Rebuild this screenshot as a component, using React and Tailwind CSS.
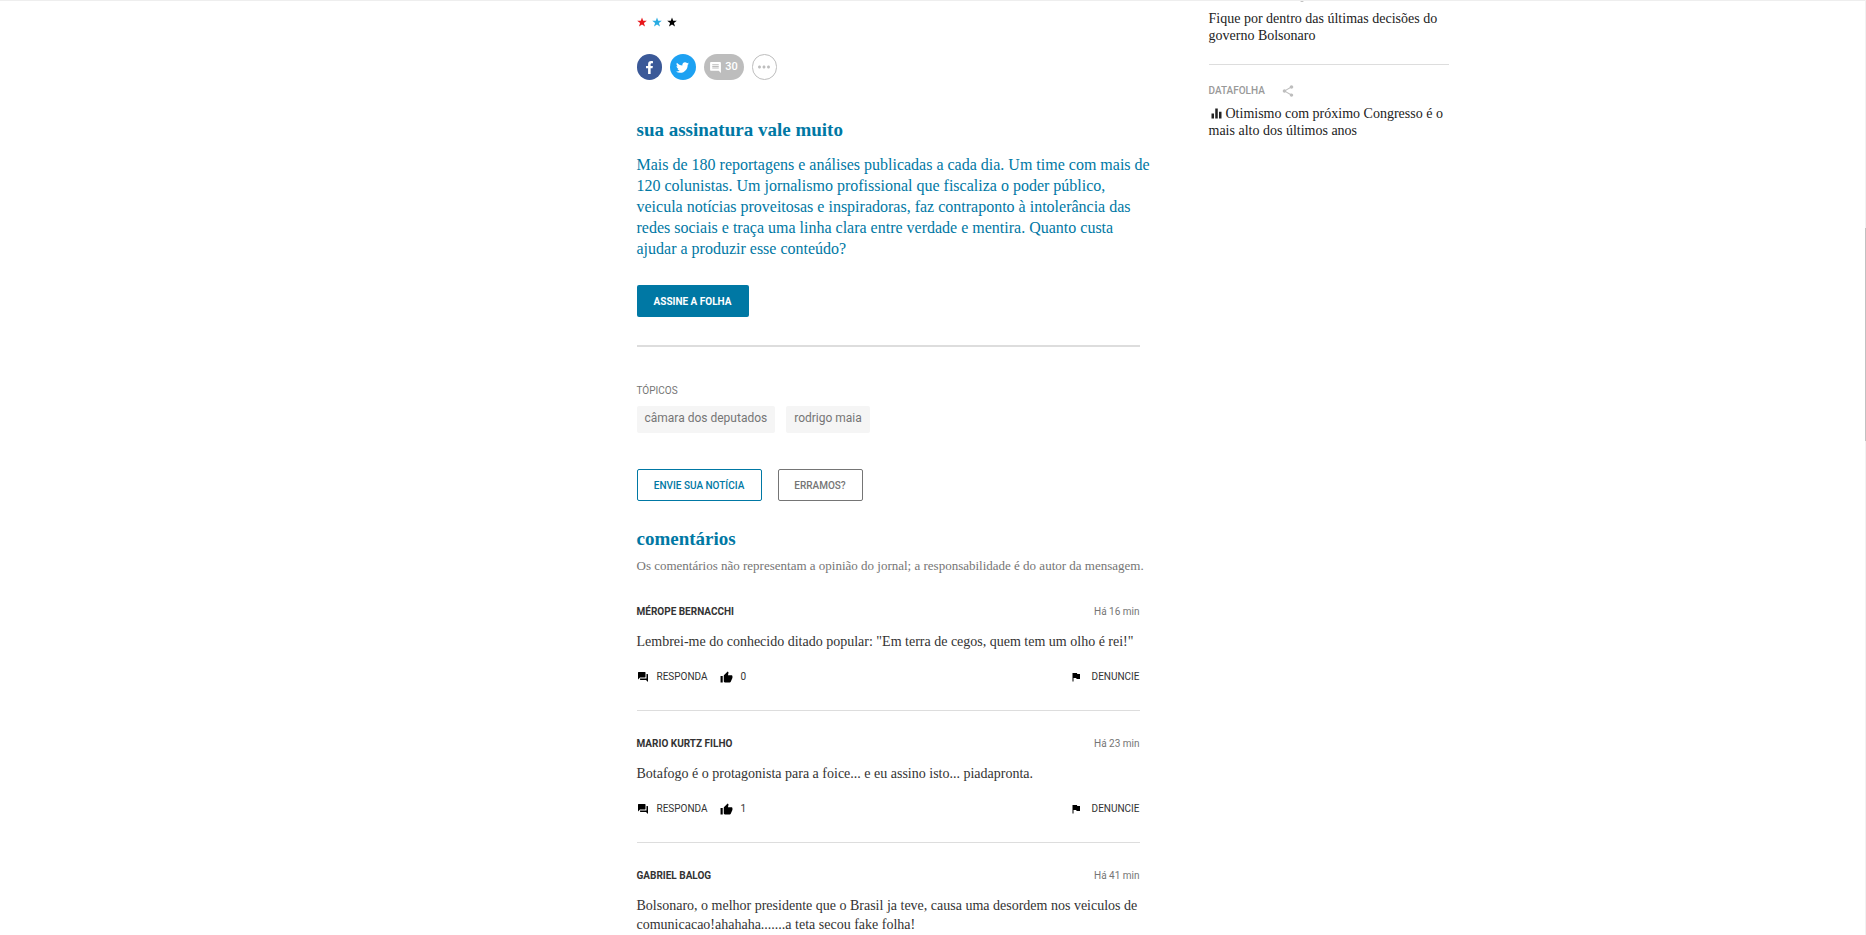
import { MdInsertComment, MdQuestionAnswer, MdThumbUp, MdFlag, MdShare, MdMoreHoriz, MdEqualizer } from "react-icons/md";
import { FaFacebookF, FaTwitter } from "react-icons/fa";

const SERIF = "font-['Liberation_Serif',serif]";

const comments = [
  {
    author: "MÉROPE BERNACCHI",
    time: "Há 16 min",
    lines: ['Lembrei-me do conhecido ditado popular: "Em terra de cegos, quem tem um olho é rei!"'],
    likes: 0,
  },
  {
    author: "MARIO KURTZ FILHO",
    time: "Há 23 min",
    lines: ["Botafogo é o protagonista para a foice... e eu assino isto... piadapronta."],
    likes: 1,
  },
  {
    author: "GABRIEL BALOG",
    time: "Há 41 min",
    lines: [
      "Bolsonaro, o melhor presidente que o Brasil ja teve, causa uma desordem nos veiculos de",
      "comunicacao!ahahaha.......a teta secou fake folha!",
    ],
  },
];

const pitch = [
  "Mais de 180 reportagens e análises publicadas a cada dia. Um time com mais de",
  "120 colunistas. Um jornalismo profissional que fiscaliza o poder público,",
  "veicula notícias proveitosas e inspiradoras, faz contraponto à intolerância das",
  "redes sociais e traça uma linha clara entre verdade e mentira. Quanto custa",
  "ajudar a produzir esse conteúdo?",
];

function Star({ className }) {
  return (
    <svg viewBox="0 0 24 24" className={`size-[10px] fill-current ${className}`} aria-hidden="true">
      <path d="M12 1l2.9 8.2h8.6l-6.9 5.2 2.6 8.6L12 17.9l-7.2 5.1 2.6-8.6L.5 9.2h8.6z" />
    </svg>
  );
}

function Lines({ items }) {
  return items.map((line) => (
    <span key={line} className="block whitespace-nowrap">
      {line}
    </span>
  ));
}

function ShareBar() {
  return (
    <div className="mt-[27px] flex gap-2">
      <a href="#facebook" aria-label="Facebook" className="flex h-[26px] w-[25px] items-center justify-center rounded-full bg-[#3b5998] text-white">
        <FaFacebookF className="size-[13px]" />
      </a>
      <a href="#twitter" aria-label="Twitter" className="flex h-[26px] w-[26px] items-center justify-center rounded-full bg-[#1da1f2] text-white">
        <FaTwitter className="size-[13px]" />
      </a>
      <a href="#comentarios" className="flex h-[26px] w-10 items-center justify-center gap-[3px] rounded-full bg-[#bdbdbd] text-[11px] font-medium text-white">
        <MdInsertComment className="size-[13px]" />
        30
      </a>
      <button type="button" aria-label="Mais opções" className="flex h-[26px] w-[25px] items-center justify-center rounded-full border border-[#bdbdbd] text-[#bdbdbd]">
        <MdMoreHoriz className="size-[18px] shrink-0" />
      </button>
    </div>
  );
}

function Actions({ likes }) {
  return (
    <div className="mt-[18px] flex text-[10px] leading-4 text-[#333]">
      <button type="button" className="flex items-center">
        <MdQuestionAnswer className="mr-2 size-3 text-black" />
        RESPONDA
      </button>
      <button type="button" aria-label="Curtir" className="ml-3 flex items-center">
        <MdThumbUp className="mr-2 size-[13px] text-black" />
        {likes}
      </button>
      <button type="button" className="ml-auto flex items-center">
        <MdFlag className="mr-[10px] size-3 text-black" />
        DENUNCIE
      </button>
    </div>
  );
}

function Comment({ author, time, lines, likes }) {
  return (
    <li className="border-b border-[#ddd] py-[25px] first:pt-0 last:border-b-0 last:pb-0">
      <div className="flex justify-between text-[10px] leading-4">
        <strong className="font-bold text-[#333]">{author}</strong>
        <span className="text-[#757575]">{time}</span>
      </div>
      <p className={`mt-3 text-[14px] leading-[19px] text-[#333] ${SERIF}`}>
        <Lines items={lines} />
      </p>
      {likes !== undefined && <Actions likes={likes} />}
    </li>
  );
}

export default function App() {
  return (
    <div className="flex min-h-screen bg-white font-['Roboto',sans-serif]">
      <div className="min-w-0 flex-1 border-t border-[#eee]">
        <div className="mx-auto flex max-w-[1032px] items-start justify-between pl-[220px]">
          <main className="w-[503px] pt-4">
            <div className="flex gap-[5px]">
              <Star className="text-[#e8161b]" />
              <Star className="text-[#2aace2]" />
              <Star className="text-black" />
            </div>
            <ShareBar />

            <section>
              <h2 className={`mt-[38px] text-[19px] leading-6 font-bold text-[#0078a4] ${SERIF}`}>sua assinatura vale muito</h2>
              <p className={`mt-3 text-[16px] leading-[21px] text-[#0078a4] ${SERIF}`}>
                <Lines items={pitch} />
              </p>
              <a href="#assine" className="mt-[26px] flex h-8 w-28 items-center justify-center rounded-xs bg-[#0078a4] text-[10px] font-bold text-white">
                ASSINE A FOLHA
              </a>
            </section>

            <hr className="mt-7 border-t-2 border-[#ddd]" />

            <section>
              <h3 className="mt-9 text-[10px] leading-4 text-[#757575]">TÓPICOS</h3>
              <div className="mt-[7px] flex gap-[11px] text-[12px] leading-[25px] text-[#757575]">
                <a href="#camara" className="rounded-xs bg-[#f5f5f5] px-2 pb-[2px]">câmara dos deputados</a>
                <a href="#maia" className="rounded-xs bg-[#f5f5f5] px-2 pb-[2px]">rodrigo maia</a>
              </div>
            </section>

            <div className="mt-9 flex gap-4 text-[10px] font-medium">
              <a href="#envie" className="flex h-8 w-[125px] items-center justify-center rounded-xs border border-[#0078a4] text-[#0078a4]">ENVIE SUA NOTÍCIA</a>
              <a href="#erramos" className="flex h-8 w-[85px] items-center justify-center rounded-xs border border-[#757575] text-[#757575]">ERRAMOS?</a>
            </div>

            <section id="comentarios">
              <h2 className={`mt-[26px] text-[19px] leading-6 font-bold text-[#0078a4] ${SERIF}`}>comentários</h2>
              <p className={`mt-[7px] text-[13px] leading-4 whitespace-nowrap text-[#757575] ${SERIF}`}>
                Os comentários não representam a opinião do jornal; a responsabilidade é do autor da mensagem.
              </p>
              <ul className="mt-[30px]">
                {comments.map((c) => (
                  <Comment key={c.author} {...c} />
                ))}
              </ul>
            </section>
          </main>

          <aside className="w-60">
            <div className="flex h-px items-end overflow-hidden pl-[91px]">
              <span className="h-1 w-1 shrink-0 rounded-full bg-[#bdbdbd]" />
            </div>
            <h3 className={`mt-2 text-[14px] leading-[17px] text-[#222] ${SERIF}`}>
              <a href="#bolsonaro"><Lines items={["Fique por dentro das últimas decisões do", "governo Bolsonaro"]} /></a>
            </h3>
            <hr className="mt-5 border-t border-[#ddd]" />
            <div className="mt-[18px] flex items-center gap-4 text-[10px] leading-4 font-medium text-[#999]">
              DATAFOLHA
              <button type="button" aria-label="Compartilhar"><MdShare className="size-[14px] text-[#bdbdbd]" /></button>
            </div>
            <h3 className={`mt-[6px] text-[14px] leading-[17px] text-[#222] ${SERIF}`}>
              <a href="#datafolha">
                <span className="flex items-center whitespace-nowrap">
                  <MdEqualizer className="mr-[2px] size-[15px]" />
                  Otimismo com próximo Congresso é o
                </span>
                <span className="block">mais alto dos últimos anos</span>
              </a>
            </h3>
          </aside>
        </div>
      </div>
      <div className="w-px bg-[#f1f1f1] pt-[228px]" aria-hidden="true">
        <div className="h-[213px] bg-[#c1c1c1]" />
      </div>
    </div>
  );
}
